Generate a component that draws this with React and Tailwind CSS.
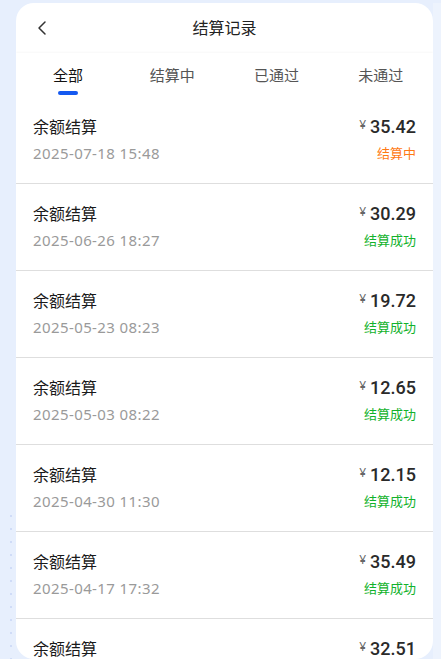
import { ChevronLeft } from "lucide-react";

const tabs = ["全部", "结算中", "已通过", "未通过"];

const records = [
  { date: "2025-07-18 15:48", amount: "35.42", status: "结算中" },
  { date: "2025-06-26 18:27", amount: "30.29", status: "结算成功" },
  { date: "2025-05-23 08:23", amount: "19.72", status: "结算成功" },
  { date: "2025-05-03 08:22", amount: "12.65", status: "结算成功" },
  { date: "2025-04-30 11:30", amount: "12.15", status: "结算成功" },
  { date: "2025-04-17 17:32", amount: "35.49", status: "结算成功" },
  { date: "2025-04-02 09:15", amount: "32.51", status: "结算成功" },
];

function App() {
  return (
    <div
      className="relative flex h-[659px] overflow-hidden bg-[#e7effd] pt-[3px]"
      style={{ fontFamily: '"Noto Sans", "Noto Sans CJK SC", sans-serif' }}
    >
      {/* dotted decoration */}
      <div className="pointer-events-none absolute left-[10px] top-[515px] flex flex-col gap-[11px]">
        {Array.from({ length: 12 }).map((_, i) => (
          <div key={i} className="h-[2px] w-[2px] rounded-full bg-[#c9d6f4]" />
        ))}
      </div>

      <div className="ml-[16px] flex w-[417px] flex-col overflow-hidden rounded-[18px] bg-white">
        {/* Header */}
        <div className="relative flex h-[50px] shrink-0 items-center justify-center">
          <ChevronLeft
            className="absolute left-[14px] top-[13px] text-[#333]"
            size={24}
            strokeWidth={1.5}
          />
          <h1 className="text-[16px] text-[#222]">结算记录</h1>
        </div>

        {/* Tabs */}
        <div className="grid h-[44px] shrink-0 grid-cols-4 shadow-[0_-1px_2px_rgba(0,0,0,0.03)]">
          {tabs.map((t, i) => (
            <div key={t} className="relative flex flex-col items-center pt-[11px]">
              <span
                className={
                  i === 0
                    ? "text-[15px] leading-[22px] text-[#111]"
                    : "text-[15px] leading-[22px] text-[#555]"
                }
              >
                {t}
              </span>
              {i === 0 && (
                <div className="mt-[5px] h-[4px] w-[20px] rounded-full bg-[#1559f0]" />
              )}
            </div>
          ))}
        </div>

        {/* List */}
        <div className="flex flex-col">
          {records.map((r, i) => (
            <div
              key={i}
              className="flex h-[87px] shrink-0 items-start justify-between border-b border-[#dedede] px-[17px] pt-[18px]"
            >
              <div className="flex flex-col">
                <span className="text-[16px] leading-[24px] text-[#1a1a1a]">余额结算</span>
                <span className="mt-[2px] text-[15px] leading-[24px] tracking-[0.4px] text-[#9a9a9a]">
                  {r.date}
                </span>
              </div>
              <div className="flex flex-col items-end">
                <div className="flex items-start leading-[24px]">
                  <span className="mr-[4px] mt-[-2px] text-[12px] text-[#666]">¥</span>
                  <span
                    className="text-[18px] font-medium text-[#2a2a2a]"
                    style={{ fontFamily: 'Roboto, "Noto Sans", sans-serif' }}
                  >
                    {r.amount}
                  </span>
                </div>
                <span
                  className={
                    r.status === "结算中"
                      ? "mt-[2px] text-[13px] leading-[24px] text-[#ff7a14]"
                      : "mt-[2px] text-[13px] leading-[24px] text-[#12b22c]"
                  }
                >
                  {r.status}
                </span>
              </div>
            </div>
          ))}
        </div>
      </div>

      <div className="ml-auto h-full w-[8px] bg-[#edf3fd]" />
    </div>
  );
}

export default App;
